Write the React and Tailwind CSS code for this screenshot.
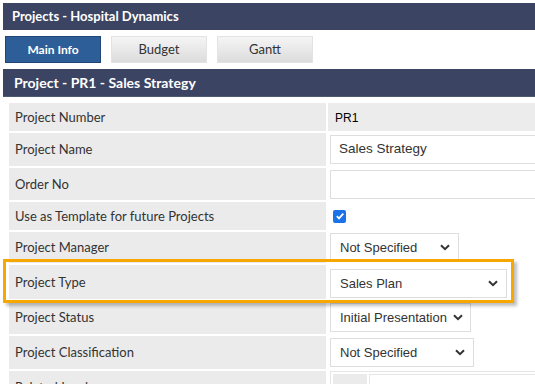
import React from "react";

const lato = { fontFamily: "Lato, 'Noto Sans', sans-serif" };

function Chevron() {
  return (
    <svg width="10" height="7" viewBox="0 0 10 7" className="ml-[6px] shrink-0">
      <path d="M1 1.2 L5 5.2 L9 1.2" fill="none" stroke="#333" strokeWidth="2" />
    </svg>
  );
}

function Select({ text, w, extra = "" }) {
  return (
    <div
      className={`flex h-[29px] items-center justify-between whitespace-nowrap border border-[#dedede] bg-white pl-[9px] pr-[8px] font-['Liberation_Sans',Arial,sans-serif] text-[13px] text-[#333] ${extra}`}
      style={{ width: w }}
    >
      <span>{text}</span>
      <Chevron />
    </div>
  );
}

function Row({ label, h, children, valueClass = "" }) {
  return (
    <div className="flex gap-[2px]" style={{ height: h }}>
      <div
        className="flex w-[317px] shrink-0 items-center whitespace-nowrap bg-[#ebebeb] pl-[6px] pt-[1px] text-[13px] text-[#333]"
        style={lato}
      >
        {label}
      </div>
      <div className={`flex flex-1 items-center ${valueClass}`}>{children}</div>
    </div>
  );
}

export default function App() {
  return (
    <div className="relative h-[384px] w-[535px] overflow-hidden bg-white">
      <div className="w-[600px] pl-[3px] pt-[3px]">
        <div
          className="flex h-[27px] items-center bg-[#3b4463] pl-[9px] text-[13px] font-bold text-white"
          style={lato}
        >
          Projects - Hospital Dynamics
        </div>
        <div className="mt-[6px] flex h-[27px] gap-[10px] pl-[2px]" style={lato}>
          <div className="flex w-[96px] items-center justify-center border border-[#1e4677] bg-[#2d5e97] text-[12px] font-bold text-white">
            Main Info
          </div>
          <div className="flex w-[96px] items-center justify-center border border-[#e3e3e3] bg-gradient-to-b from-[#f5f5f5] to-[#dcdcdc] text-[13px] text-[#333]">
            Budget
          </div>
          <div className="flex w-[96px] items-center justify-center border border-[#e3e3e3] bg-gradient-to-b from-[#f5f5f5] to-[#dcdcdc] text-[13px] text-[#333]">
            Gantt
          </div>
        </div>
        <div
          className="mt-[6px] flex h-[28px] items-center border-b border-[#4b5a70] bg-[#3b4463] pl-[11px] text-[14px] font-bold text-white"
          style={lato}
        >
          Project - PR1 - Sales Strategy
        </div>
        <div className="ml-[6px] mt-[6px] flex flex-col gap-[2px]">
          <Row label="Project Number" h={28} valueClass="bg-[#ececec]">
            <span className="pl-[7px] pt-[1px] font-['Liberation_Sans',Arial,sans-serif] text-[12px] text-black">
              PR1
            </span>
          </Row>
          <Row label="Project Name" h={33}>
            <div className="ml-[2px] flex h-[29px] flex-1 items-center border border-[#dedede] bg-white pl-[8px] font-['Liberation_Sans',Arial,sans-serif] text-[13.5px] text-[#333]">
              Sales Strategy
            </div>
          </Row>
          <Row label="Order No" h={32}>
            <div className="ml-[2px] h-[29px] flex-1 border border-[#dedede] bg-white" />
          </Row>
          <Row label="Use as Template for future Projects" h={28}>
            <div className="ml-[5px] flex h-[13px] w-[13px] items-center justify-center rounded-[2px] bg-[#1a73e8]">
              <svg width="10" height="10" viewBox="0 0 10 10">
                <path d="M1.8 5.2 L4 7.4 L8.3 2.6" fill="none" stroke="white" strokeWidth="1.8" />
              </svg>
            </div>
          </Row>
          <Row label="Project Manager" h={31}>
            <Select text="Not Specified" w={129} extra="ml-[2px]" />
          </Row>
          <Row label="Project Type" h={34}>
            <Select text="Sales Plan" w={177} extra="ml-[2px] mt-[3px]" />
          </Row>
          <Row label="Project Status" h={33}>
            <Select text="Initial Presentation" w={141} extra="ml-[2px]" />
          </Row>
          <Row label="Project Classification" h={33}>
            <Select text="Not Specified" w={144} extra="ml-[2px]" />
          </Row>
          <Row label="Related Leads" h={33} valueClass="items-start">
            <div className="ml-[2px] flex h-[31px] flex-1 gap-[2px] border border-[#e6e6e6] bg-white p-[2px]">
              <div className="w-[34px] bg-[#ebebeb]" />
              <div className="flex-1 border border-[#e6e6e6] bg-white" />
            </div>
          </Row>
        </div>
      </div>
      <div className="pointer-events-none absolute left-[3px] top-[259px] h-[44px] w-[511px] border-[3px] border-[#f6a800] shadow-[3px_3px_3px_rgba(0,0,0,0.25)]" />
    </div>
  );
}
